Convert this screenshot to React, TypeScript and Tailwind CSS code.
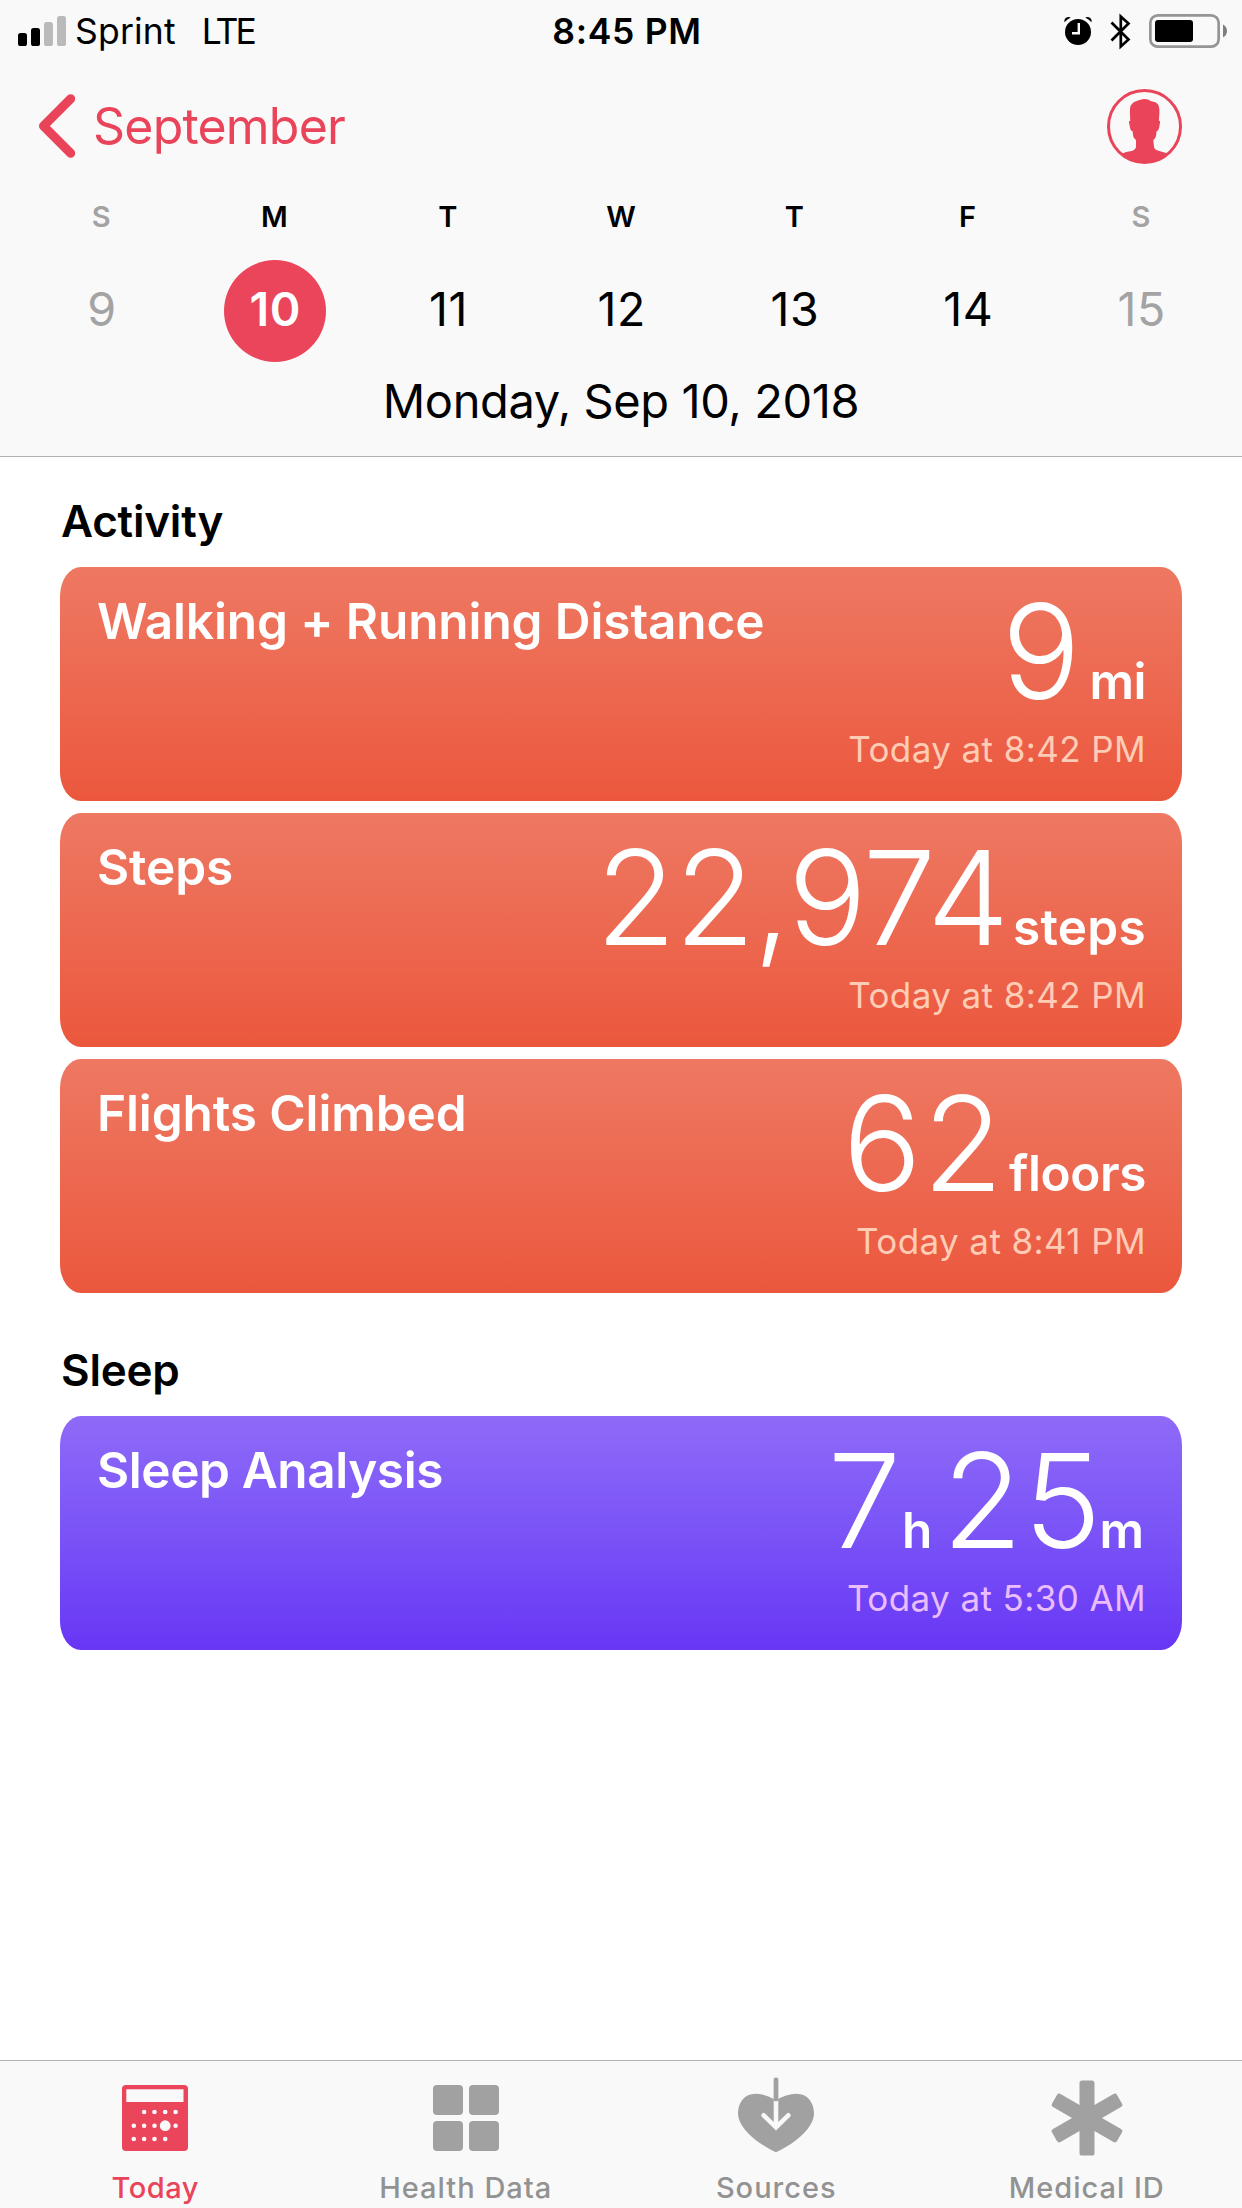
import type { ReactNode } from 'react';
import clsx from 'clsx';

type Day = { letter: string; date: number; weekend?: boolean; selected?: boolean };

const days: Day[] = [
  { letter: 'S', date: 9, weekend: true },
  { letter: 'M', date: 10, selected: true },
  { letter: 'T', date: 11 },
  { letter: 'W', date: 12 },
  { letter: 'T', date: 13 },
  { letter: 'F', date: 14 },
  { letter: 'S', date: 15, weekend: true },
];

function StatusBar() {
  return (
    <div className="grid grid-cols-[1fr_auto_1fr] items-center h-[62px] pl-[18px] pr-[15px] text-[35.5px] text-black">
      <div className="flex items-center">
        <svg width="48" height="30" viewBox="0 0 48 30">
          <rect x="0" y="17" width="9" height="13" rx="2.6" />
          <rect x="13" y="12" width="9" height="18" rx="2.6" />
          <rect x="26" y="6" width="9" height="24" rx="2.6" fill="#bababa" />
          <rect x="39" y="0" width="9" height="30" rx="2.6" fill="#bababa" />
        </svg>
        <span className="ml-[9px] pt-[2px] tracking-[0.2px]">Sprint</span>
        <span className="ml-[26px] pt-[2px] tracking-[-3px]">LTE</span>
      </div>
      <span className="pl-[9px] pt-[2px] font-semibold tracking-[0.7px]">8:45 PM</span>
      <div className="flex items-center justify-end">
        <svg width="28" height="30" viewBox="0 0 28 30">
          <circle cx="14" cy="16" r="13" />
          <path d="M.6 6.2C-.4 3 2.2 1 4.6 1c1 0 1.7.3 2.1.8C4.6 2.8 2.5 4.3.6 6.2ZM27.4 6.2C28.4 3 25.8 1 23.4 1c-1 0-1.7.3-2.1.8 2.1 1 4.2 2.5 6.1 4.4Z" />
          <path d="M14.8 7v10.2H8" fill="none" stroke="#f9f9f9" strokeWidth="2.4" />
        </svg>
        <svg className="ml-[18px]" width="22" height="37" viewBox="0 0 22 37">
          <path d="M1.5 9.500 18.5 26.5 10.8 33.5V3.500L18.5 10.5 1.5 27.5" fill="none" stroke="#000" strokeWidth="2.7" />
        </svg>
        <svg className="ml-[17px]" width="78" height="34" viewBox="0 0 78 34">
          <rect x="1.35" y="1.35" width="68.3" height="31.3" rx="7.5" fill="none" stroke="#959595" strokeWidth="2.7" />
          <rect x="6" y="6" width="38" height="22" rx="3" />
          <path d="M74 10.5c2.7 1.2 4 3.7 4 6.500s-1.3 5.3-4 6.500Z" fill="#7f7f7f" />
        </svg>
      </div>
    </div>
  );
}

function NavBar() {
  return (
    <div className="flex items-center justify-between h-[128px] pl-[38px] pr-[60px] text-[#e9445a]">
      <button className="flex items-center text-[50px] tracking-[-0.8px]">
        <svg width="38" height="64" viewBox="0 0 38 64">
          <path d="M32.7 4.700 5.5 32 32.7 59.3" fill="none" stroke="currentColor" strokeWidth="9" strokeLinecap="round" strokeLinejoin="round" />
        </svg>
        <span className="ml-[17px]">September</span>
      </button>
      <svg width="75" height="75" viewBox="0 0 75 75" fill="currentColor">
        <circle cx="37.5" cy="37.5" r="36" fill="none" stroke="currentColor" strokeWidth="3" />
        <path d="M37.3 10C34.7 10.2 32.5 11 29.7 12 26 13.2 23.4 15.500 23 19.3 22.7 23.3 23.1 28.2 23.3 31.7 22 31.5 21.8 32.500 22.1 33.7L22.9 38.3C23.2 39.9 23.8 41.8 25.6 42.3 26 44.7 26 47 26.7 48.5L29 51.3V57.700C28.6 60.3 26.700 61.3 24.7 61.9 21 62.7 17.300 63 14 65.1A36 36 0 0 0 37.5 74 36 36 0 0 0 61 65.1C57.7 62.800 54 62.5 50.5 61.4 48.500 60.6 47.2 59.5 47 57.7L46.3 51.2 48.5 48.6C49.3 46.9 49.2 44.6 49.6 42.3 51.4 41.8 51.8 39.9 52.2 38.3L53 33.7C53.2 32.5 53 31.5 51.9 31.7 52.1 27.7 52.7 23.7 52.3 19.7 52 16.1 50.4 13.800 47.7 13L44.1 12.2C41.8 10.9 40 10 37.3 10Z" />
      </svg>
    </div>
  );
}

function WeekStrip() {
  return (
    <div className="grid grid-cols-7 px-[14.5px]">
      {days.map((day) => (
        <div key={day.date} className={clsx('flex flex-col items-center', day.weekend ? 'text-[#a3a3a3]' : 'text-black')}>
          <span className="h-[53px] flex items-center text-[29px] font-semibold">{day.letter}</span>
          <span
            className={clsx(
              'mt-[17px] ml-[1.5px] flex items-center justify-center size-[102px] pb-[3px] rounded-full text-[46.5px] tracking-[0.6px]',
              day.selected && 'bg-[#ea455b] text-white font-semibold'
            )}
          >
            {day.date}
          </span>
        </div>
      ))}
    </div>
  );
}

type CardProps = {
  title: string;
  time: string;
  tone?: 'activity' | 'sleep';
  children: ReactNode;
};

function Card({ title, time, tone = 'activity', children }: CardProps) {
  return (
    <div
      className={clsx(
        'flex justify-between h-[234px] pt-[36px] pl-[37px] pr-[36px] rounded-[21px/29px] text-white bg-linear-to-b',
        tone === 'sleep' ? 'from-[#8f6af8] to-[#6835f5]' : 'from-[#ee7862] to-[#eb573d]'
      )}
    >
      <h3
        className={clsx(
          'text-[49.5px] leading-[36px] font-semibold whitespace-nowrap',
          tone === 'sleep' ? 'tracking-[-0.4px]' : 'tracking-[-0.1px]'
        )}
      >
        {title}
      </h3>
      <div className="flex flex-col items-end">
        <div className="flex items-baseline h-[96px] pt-px">{children}</div>
        <p
          className={clsx(
            'mt-[38px] text-[35px] leading-[25px] tracking-[0.4px]',
            tone === 'sleep' ? 'text-[#eabdff]' : 'text-[#ffccb6]'
          )}
        >
          {time}
        </p>
      </div>
    </div>
  );
}

function Num({ children, className }: { children: ReactNode; className?: string }) {
  return <span className={clsx('text-[131px] leading-[96px] font-light', className)}>{children}</span>;
}

function Unit({ children, className }: { children: ReactNode; className?: string }) {
  return <span className={clsx('text-[49.5px] leading-[36px] font-semibold', className)}>{children}</span>;
}

function Section({ title, children }: { title: string; children: ReactNode }) {
  return (
    <section className="px-[60px]">
      <h2 className="flex items-center h-[110px] pt-[18px] pl-px text-[44px] font-semibold tracking-[-0.2px] text-black">{title}</h2>
      <div className="flex flex-col gap-3">{children}</div>
    </section>
  );
}

function TodayIcon() {
  const dots = [
    [22.1, 27], [32.5, 27], [43.2, 27], [53.6, 27],
    [11.8, 40.7], [22.1, 40.7], [32.5, 40.7], [53.6, 40.7],
    [11.8, 54], [22.1, 54], [32.5, 54], [43.2, 54],
  ];
  return (
    <svg width="84" height="84" viewBox="-9 -9 84 84" fill="#f9f9f9">
      <rect width="66" height="66" rx="4" fill="#ea455b" />
      <rect x="4.3" y="4.3" width="57.2" height="12.7" />
      {dots.map(([x, y]) => (
        <circle key={`${x}-${y}`} cx={x} cy={y} r="2.3" />
      ))}
      <circle cx="43.2" cy="40.7" r="5.4" />
    </svg>
  );
}

function HealthDataIcon() {
  return (
    <svg width="84" height="84" viewBox="-9 -9 84 84" fill="#a1a1a1">
      <rect width="30" height="30" rx="4" />
      <rect x="36" width="30" height="30" rx="4" />
      <rect y="36" width="30" height="30" rx="4" />
      <rect x="36" y="36" width="30" height="30" rx="4" />
    </svg>
  );
}

function SourcesIcon() {
  return (
    <svg width="84" height="84" viewBox="0 0 84 84" fill="none" strokeLinecap="round">
      <path d="M42 24.3C35.5 20 28 17.7 21.5 17.7 10.5 17.7 4 26.5 4 37.5 4 50 19 65.500 42 76.3 65 65.500 80 50 80 37.5 80 26.5 73.5 17.7 62.5 17.7 56 17.7 48.5 20 42 24.3Z" fill="#a1a1a1" />
      <path d="M42 25V51M29.7 39.3 42 51.3 54.3 39.3" stroke="#f9f9f9" strokeWidth="4.6" />
      <path d="M42 3.800V23" stroke="#a1a1a1" strokeWidth="4.8" />
    </svg>
  );
}

function MedicalIdIcon() {
  return (
    <svg width="84" height="84" viewBox="-42 -42 84 84" fill="#a1a1a1">
      <rect x="-7.5" y="-37.5" width="15" height="75" rx="2.6" />
      <rect x="-7.5" y="-37.5" width="15" height="75" rx="2.6" transform="rotate(60)" />
      <rect x="-7.5" y="-37.5" width="15" height="75" rx="2.6" transform="rotate(-60)" />
    </svg>
  );
}

function Tab({ label, active, children }: { label: string; active?: boolean; children: ReactNode }) {
  return (
    <button className={clsx('flex flex-col items-center pt-[15px]', active ? 'text-[#e9445a]' : 'text-[#929292]')}>
      {children}
      <span className={clsx('mt-[17px] text-[29px] leading-[21px] font-medium', active ? 'tracking-[0.5px]' : 'tracking-[1px]')}>
        {label}
      </span>
    </button>
  );
}

export default function App() {
  return (
    <div className="flex flex-col w-[1242px] h-[2208px] overflow-hidden bg-white font-['Inter',sans-serif]">
      <header className="h-[457px] bg-[#f9f9f9] border-b border-[#b2b2b2]">
        <StatusBar />
        <NavBar />
        <WeekStrip />
        <p className="flex items-center justify-center h-[78px] text-[47px] tracking-[-0.4px] text-black">Monday, Sep 10, 2018</p>
      </header>

      <main className="flex-1 flex flex-col gap-[13px]">
        <Section title="Activity">
          <Card title="Walking + Running Distance" time="Today at 8:42 PM">
            <Num>9</Num>
            <Unit className="ml-[9px] tracking-[-0.5px]">mi</Unit>
          </Card>
          <Card title="Steps" time="Today at 8:42 PM">
            <Num className="tracking-[-1.5px]">22,974</Num>
            <Unit className="ml-[5px] tracking-[0.3px]">steps</Unit>
          </Card>
          <Card title="Flights Climbed" time="Today at 8:41 PM">
            <Num className="tracking-[1px]">62</Num>
            <Unit className="ml-[5px] tracking-[-0.4px]">floors</Unit>
          </Card>
        </Section>

        <Section title="Sleep">
          <Card title="Sleep Analysis" time="Today at 5:30 AM" tone="sleep">
            <Num>7</Num>
            <Unit className="ml-px">h</Unit>
            <Num className="ml-[10px] tracking-[1px]">25</Num>
            <Unit className="ml-[-3px] mr-[2px]">m</Unit>
          </Card>
        </Section>
      </main>

      <nav className="grid grid-cols-4 h-[148px] bg-[#f9f9f9] border-t border-[#b2b2b2]">
        <Tab label="Today" active>
          <TodayIcon />
        </Tab>
        <Tab label="Health Data">
          <HealthDataIcon />
        </Tab>
        <Tab label="Sources">
          <SourcesIcon />
        </Tab>
        <Tab label="Medical ID">
          <MedicalIdIcon />
        </Tab>
      </nav>
    </div>
  );
}
